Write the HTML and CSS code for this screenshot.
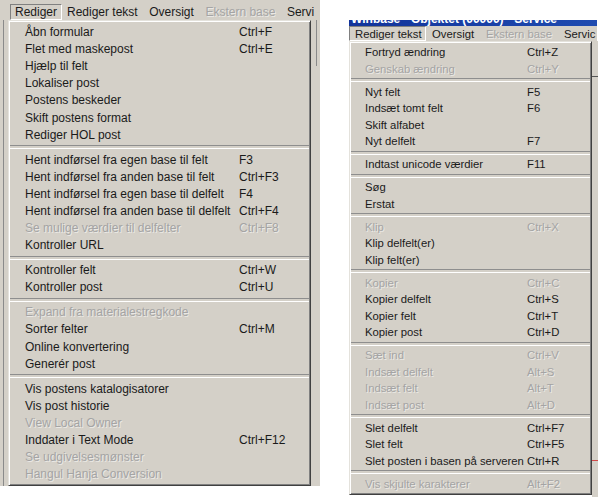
FILE: index.html
```html
<!DOCTYPE html>
<html lang="da">
<head>
<meta charset="utf-8">
<title>Menuer</title>
<link rel="stylesheet" href="styles.css">
</head>
<body>
<div class="canvas">
  <div class="shot shot-left">
    <div class="menubar menubar-left">
      <span class="mb-item open">Rediger</span>
      <span class="mb-item">Rediger tekst</span>
      <span class="mb-item">Oversigt</span>
      <span class="mb-item disabled">Ekstern base</span>
      <span class="mb-item">Servi</span>
    </div>
    <div class="shot-body">
      <div class="win-strip strip-l1"><span class="strip-line"></span></div>
      <div class="menu menu-left">
        <div class="mi"><span class="lbl">Åbn formular</span><span class="sc">Ctrl+F</span></div>
        <div class="mi"><span class="lbl">Flet med maskepost</span><span class="sc">Ctrl+E</span></div>
        <div class="mi"><span class="lbl">Hjælp til felt</span></div>
        <div class="mi"><span class="lbl">Lokaliser post</span></div>
        <div class="mi"><span class="lbl">Postens beskeder</span></div>
        <div class="mi"><span class="lbl">Skift postens format</span></div>
        <div class="mi"><span class="lbl">Rediger HOL post</span></div>
        <div class="sep"></div>
        <div class="mi"><span class="lbl">Hent indførsel fra egen base til felt</span><span class="sc">F3</span></div>
        <div class="mi"><span class="lbl">Hent indførsel fra anden base til felt</span><span class="sc">Ctrl+F3</span></div>
        <div class="mi"><span class="lbl">Hent indførsel fra egen base til delfelt</span><span class="sc">F4</span></div>
        <div class="mi"><span class="lbl">Hent indførsel fra anden base til delfelt</span><span class="sc">Ctrl+F4</span></div>
        <div class="mi disabled"><span class="lbl">Se mulige værdier til delfelter</span><span class="sc">Ctrl+F8</span></div>
        <div class="mi"><span class="lbl">Kontroller URL</span></div>
        <div class="sep"></div>
        <div class="mi"><span class="lbl">Kontroller felt</span><span class="sc">Ctrl+W</span></div>
        <div class="mi"><span class="lbl">Kontroller post</span><span class="sc">Ctrl+U</span></div>
        <div class="sep"></div>
        <div class="mi disabled"><span class="lbl">Expand fra materialestregkode</span></div>
        <div class="mi"><span class="lbl">Sorter felter</span><span class="sc">Ctrl+M</span></div>
        <div class="mi"><span class="lbl">Online konvertering</span></div>
        <div class="mi"><span class="lbl">Generér post</span></div>
        <div class="sep"></div>
        <div class="mi"><span class="lbl">Vis postens katalogisatorer</span></div>
        <div class="mi"><span class="lbl">Vis post historie</span></div>
        <div class="mi disabled"><span class="lbl">View Local Owner</span></div>
        <div class="mi"><span class="lbl">Inddater i Text Mode</span><span class="sc">Ctrl+F12</span></div>
        <div class="mi disabled"><span class="lbl">Se udgivelsesmønster</span></div>
        <div class="mi disabled"><span class="lbl">Hangul Hanja Conversion</span></div>
      </div>
      <div class="win-strip strip-r1"><span class="strip-line"></span></div>
    </div>
  </div>

  <div class="shot shot-right">
    <div class="titlebar"><span class="title-text">Winbase - Objektet (00000) - Service</span></div>
    <div class="menubar menubar-right">
      <span class="mb-item open">Rediger tekst</span>
      <span class="mb-item">Oversigt</span>
      <span class="mb-item disabled">Ekstern base</span>
      <span class="mb-item">Servic</span>
    </div>
    <div class="shot-body">
      <div class="menu menu-right">
        <div class="mi"><span class="lbl">Fortryd ændring</span><span class="sc">Ctrl+Z</span></div>
        <div class="mi disabled"><span class="lbl">Genskab ændring</span><span class="sc">Ctrl+Y</span></div>
        <div class="sep"></div>
        <div class="mi"><span class="lbl">Nyt felt</span><span class="sc">F5</span></div>
        <div class="mi"><span class="lbl">Indsæt tomt felt</span><span class="sc">F6</span></div>
        <div class="mi"><span class="lbl">Skift alfabet</span></div>
        <div class="mi"><span class="lbl">Nyt delfelt</span><span class="sc">F7</span></div>
        <div class="sep"></div>
        <div class="mi"><span class="lbl">Indtast unicode værdier</span><span class="sc">F11</span></div>
        <div class="sep"></div>
        <div class="mi"><span class="lbl">Søg</span></div>
        <div class="mi"><span class="lbl">Erstat</span></div>
        <div class="sep"></div>
        <div class="mi disabled"><span class="lbl">Klip</span><span class="sc">Ctrl+X</span></div>
        <div class="mi"><span class="lbl">Klip delfelt(er)</span></div>
        <div class="mi"><span class="lbl">Klip felt(er)</span></div>
        <div class="sep"></div>
        <div class="mi disabled"><span class="lbl">Kopier</span><span class="sc">Ctrl+C</span></div>
        <div class="mi"><span class="lbl">Kopier delfelt</span><span class="sc">Ctrl+S</span></div>
        <div class="mi"><span class="lbl">Kopier felt</span><span class="sc">Ctrl+T</span></div>
        <div class="mi"><span class="lbl">Kopier post</span><span class="sc">Ctrl+D</span></div>
        <div class="sep"></div>
        <div class="mi disabled"><span class="lbl">Sæt ind</span><span class="sc">Ctrl+V</span></div>
        <div class="mi disabled"><span class="lbl">Indsæt delfelt</span><span class="sc">Alt+S</span></div>
        <div class="mi disabled"><span class="lbl">Indsæt felt</span><span class="sc">Alt+T</span></div>
        <div class="mi disabled"><span class="lbl">Indsæt post</span><span class="sc">Alt+D</span></div>
        <div class="sep"></div>
        <div class="mi"><span class="lbl">Slet delfelt</span><span class="sc">Ctrl+F7</span></div>
        <div class="mi"><span class="lbl">Slet felt</span><span class="sc">Ctrl+F5</span></div>
        <div class="mi"><span class="lbl">Slet posten i basen på serveren</span><span class="sc">Ctrl+R</span></div>
        <div class="sep"></div>
        <div class="mi disabled"><span class="lbl">Vis skjulte karakterer</span><span class="sc">Alt+F2</span></div>
      </div>
      <div class="win-strip strip-r2"><span class="red-line rl-1"></span><span class="red-line rl-2"></span></div>
    </div>
  </div>
</div>
</body>
</html>
```

FILE: styles.css
```css
* { box-sizing: border-box; }

html, body {
  margin: 0;
  padding: 0;
  background: #ffffff;
}

.canvas {
  width: 601px;
  height: 504px;
  display: flex;
  align-items: flex-start;
  overflow: hidden;
  font-family: "Liberation Sans", Arial, sans-serif;
  font-size: 11px;
  color: #1a1a1a;
}

.shot {
  display: flex;
  flex-direction: column;
  flex: none;
}

.shot-left {
  width: 320px;
  font-size: 12px;
}

.shot-right {
  width: 248px;
  margin-left: 29px;
  margin-top: 20px;
  font-size: 11.3px;
}

/* ---------- menu bars ---------- */
.menubar {
  display: flex;
  align-items: stretch;
  background: #d4d0c8;
  white-space: nowrap;
  overflow: hidden;
}

.menubar-left {
  height: 20px;
  padding: 4px 0 0 10px;
}

.menubar-right {
  height: 15px;
  padding: 0;
}

.mb-item {
  display: flex;
  align-items: center;
  padding: 0 5px;
  border: 1px solid transparent;
}

.menubar-left .mb-item { padding: 0 5.5px 0 4px; }

.mb-item.open {
  border-color: #808080 #ffffff #ffffff #808080;
}

.menubar-left .mb-item.open { width: 52px; }
.menubar-right .mb-item.open { width: 77px; }

.mb-item.disabled,
.mi.disabled {
  color: #a4a4a4;
  text-shadow: 1px 1px 0 rgba(255, 255, 255, 0.55);
}

/* ---------- title bar ---------- */
.titlebar {
  height: 6px;
  background: linear-gradient(90deg, #12339a, #1f4bb0);
  overflow: hidden;
}

.title-text {
  display: block;
  color: #ffffff;
  font-weight: bold;
  font-size: 12px;
  line-height: 12px;
  margin-top: -7px;
  padding-left: 2px;
  white-space: nowrap;
}

/* ---------- bodies ---------- */
.shot-body {
  display: flex;
  align-items: flex-start;
}

.win-strip {
  background: #d4d0c8;
  position: relative;
  flex: none;
}

.strip-l1 { width: 8px; height: 466px; }
.strip-r1 { width: 9px; height: 466px; }
.strip-r2 { width: 6px; height: 456px; }

.strip-line {
  position: absolute;
  top: 0;
  bottom: 0;
  width: 1px;
  background: #8a8a8a;
}

.strip-l1 .strip-line { left: 3px; }
.strip-r1 .strip-line { left: 5px; bottom: 420px; }

.red-line {
  position: absolute;
  left: 0;
  right: 0;
  height: 1px;
}

.rl-1 { top: 35px; background: #555555; }
.rl-2 { top: 419px; background: #d24a4a; }

/* ---------- dropdown menus ---------- */
.menu {
  flex: none;
  background: #d4d0c8;
  border: 1px solid;
  border-color: #e4e2dc #404040 #404040 #e4e2dc;
  box-shadow: inset 1px 1px 0 #ffffff, inset -1px -1px 0 #808080;
  padding: 2px 0;
  white-space: nowrap;
}

.menu-left {
  width: 303px;
  height: 466px;
  --ih: 17.2px;
  --sh: 7.6px;
  --pl: 16px;
  --lw: 214px;
}

.menu-right {
  width: 243px;
  height: 454px;
  --ih: 16.5px;
  --sh: 6.5px;
  --pl: 15px;
  --lw: 162px;
}

.mi {
  display: flex;
  align-items: center;
  height: var(--ih);
  padding-left: var(--pl);
}

.lbl {
  flex: none;
  width: var(--lw);
}

.sep {
  height: var(--sh);
  display: flex;
  align-items: center;
  padding: 0 1px;
}

.sep::before {
  content: "";
  display: block;
  width: 100%;
  height: 2px;
  border-top: 1px solid #8e8e8e;
  border-bottom: 1px solid #ffffff;
}
```
